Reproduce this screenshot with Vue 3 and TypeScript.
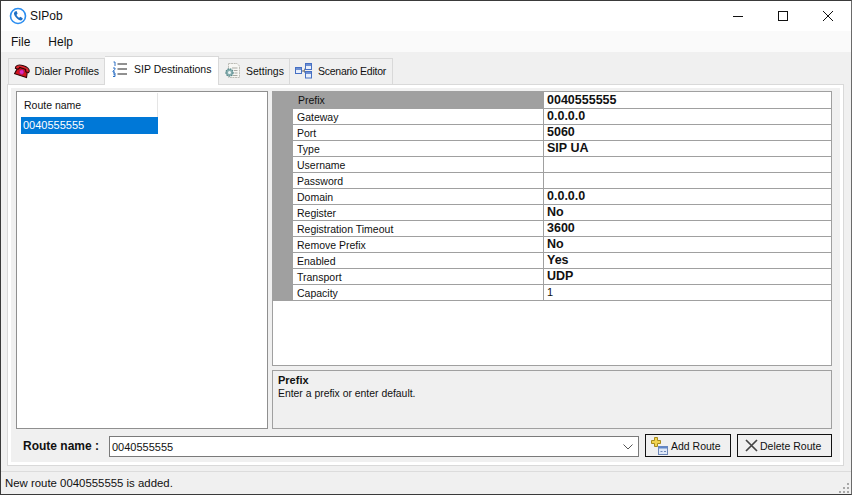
<script setup lang="ts">
interface Prop {
  name: string
  value: string
  plain?: boolean
}

const routes = ['0040555555']

const props: Prop[] = [
  { name: 'Prefix', value: '0040555555' },
  { name: 'Gateway', value: '0.0.0.0' },
  { name: 'Port', value: '5060' },
  { name: 'Type', value: 'SIP UA' },
  { name: 'Username', value: '' },
  { name: 'Password', value: '' },
  { name: 'Domain', value: '0.0.0.0' },
  { name: 'Register', value: 'No' },
  { name: 'Registration Timeout', value: '3600' },
  { name: 'Remove Prefix', value: 'No' },
  { name: 'Enabled', value: 'Yes' },
  { name: 'Transport', value: 'UDP' },
  { name: 'Capacity', value: '1', plain: true },
]
</script>

<template>
  <div class="window">
    <header class="titlebar">
      <svg class="app-icon" width="18" height="18" viewBox="0 0 18 18">
        <circle cx="9" cy="9" r="7.5" fill="#fff" stroke="#2a8df0" stroke-width="1.6" />
        <path d="M6 4.4 L7.6 4 L8.6 6.7 L7.5 7.7 C7.9 9 8.9 10.2 10.2 10.8 L11.3 9.8 L13.8 11.2 L13.2 12.8 C12.4 13.6 11.2 13.5 10 12.9 C7.6 11.7 5.6 9.2 5 7 C4.8 6 5.3 5 6 4.4 Z" fill="#1f6fc4" />
      </svg>
      <span class="app-title">SIPob</span>
      <div class="controls">
        <svg width="12" height="12" viewBox="0 0 12 12"><path d="M1 6.5 H11" stroke="#111" stroke-width="1" /></svg>
        <svg width="12" height="12" viewBox="0 0 12 12"><rect x="1.5" y="1.5" width="9" height="9" fill="none" stroke="#111" stroke-width="1" /></svg>
        <svg width="12" height="12" viewBox="0 0 12 12"><path d="M1 1 L11 11 M11 1 L1 11" stroke="#111" stroke-width="1" /></svg>
      </div>
    </header>

    <nav class="menubar">
      <span>File</span>
      <span>Help</span>
    </nav>

    <div class="tabs">
      <div class="tab first">
        <svg width="20" height="18" viewBox="0 0 20 18">
          <g transform="rotate(18 9 9)">
            <path d="M3 9 L6 5.5 H12 L15.5 9 L16.5 14.5 H2 Z" fill="#d4141e" stroke="#2f0406" stroke-width="1.2" />
            <path d="M0.8 6.5 C2.5 1.5 15.5 1.5 17.2 6.5 L17 8.4 L13.6 8.4 L12.6 5.8 H5.4 L4.4 8.4 L1 8.4 Z" fill="#e3252d" stroke="#2f0406" stroke-width="1.2" />
            <circle cx="9.2" cy="10.2" r="2.7" fill="#e02bc0" stroke="#8a1260" stroke-width="0.6" />
          </g>
        </svg>
        <span>Dialer Profiles</span>
      </div>
      <div class="tab active">
        <svg width="16" height="16" viewBox="0 0 16 16">
          <path d="M5.5 3 H15 M5.5 8 H15 M5.5 13 H15" stroke="#222" stroke-width="1" />
          <path d="M1.5 1 H3 V5 M1 7 H3 V8.5 L1 10 V11 H3 M1 12 H3 V15.5 H1 M1.5 13.7 H3" fill="none" stroke="#2b6fc4" stroke-width="1" />
        </svg>
        <span>SIP Destinations</span>
      </div>
      <div class="tab">
        <svg width="17" height="17" viewBox="0 0 17 17">
          <path d="M4.5 1.5 H13 L15.5 4 V15.5 H4.5 Z" fill="#f7f7f4" stroke="#bcbcb6" stroke-width="1" stroke-dasharray="2 0.6" />
          <path d="M8 6 H13.5 M10 8.5 H13.5 M10.5 11 H13.5 M9 13.5 H13.5" stroke="#a9a9a3" stroke-width="1" />
          <circle cx="5.5" cy="10.5" r="3.6" fill="#86aeb0" stroke="#5a8a8c" stroke-width="1.2" stroke-dasharray="1.6 0.8" />
          <circle cx="5.5" cy="10.5" r="1.5" fill="#eef6f5" />
        </svg>
        <span>Settings</span>
      </div>
      <div class="tab last">
        <svg width="18" height="16" viewBox="0 0 18 16">
          <path d="M6 8 H9 M9 8 L11 4 M9 8 L11 11" stroke="#666" stroke-width="1" fill="none" />
          <rect x="0.5" y="4.5" width="6" height="6" fill="#e8effb" stroke="#4670c4" />
          <rect x="10.5" y="0.5" width="6" height="6" fill="#e8effb" stroke="#4670c4" />
          <rect x="10.5" y="8.5" width="6" height="6.5" fill="#e8effb" stroke="#4670c4" />
          <path d="M1 6 H6 M11 2 H16 M11 10 H16" stroke="#4670c4" stroke-width="1.4" />
        </svg>
        <span>Scenario Editor</span>
      </div>
    </div>

    <main class="page">
      <div class="panes">
        <section class="route-list">
          <div class="route-head">Route name</div>
          <div v-for="route in routes" :key="route" class="route-item">{{ route }}</div>
        </section>

        <section class="right-pane">
          <div class="grid-box">
            <div
              v-for="(p, i) in props"
              :key="p.name"
              class="grid-row"
              :class="{ selected: i === 0 }"
            >
              <div class="cell-margin" />
              <div class="cell-name">{{ p.name }}</div>
              <div class="cell-value" :class="{ plain: p.plain }">{{ p.value }}</div>
            </div>
          </div>
          <div class="help-box">
            <div class="help-title">Prefix</div>
            <div>Enter a prefix or enter default.</div>
          </div>
        </section>
      </div>

      <div class="route-form">
        <label class="form-label">Route name :</label>
        <div class="combo">
          <span>0040555555</span>
          <svg width="12" height="8" viewBox="0 0 12 8"><path d="M1.5 1.5 L6 6 L10.5 1.5" fill="none" stroke="#555" stroke-width="1" /></svg>
        </div>
        <button class="btn add">
          <svg width="17" height="18" viewBox="0 0 17 18">
            <path d="M3.5 0.5 H6.5 V3.5 H9.5 V6.5 H6.5 V9.5 H3.5 V6.5 H0.5 V3.5 H3.5 Z" fill="#f2d34f" stroke="#a68a1c" />
            <rect x="7.5" y="9.5" width="9" height="8" fill="#dfe8f7" stroke="#6d87b8" />
            <rect x="7.5" y="9.5" width="9" height="2" fill="#5f86c9" />
            <path d="M9.5 14.5 H11.5 M13 14.5 H15" stroke="#6d87b8" />
          </svg>
          <span>Add Route</span>
        </button>
        <button class="btn delete">
          <svg width="15" height="15" viewBox="0 0 15 15"><path d="M2 2 L13 13 M13 2 L2 13" stroke="#444" stroke-width="1.7" /></svg>
          <span>Delete Route</span>
        </button>
      </div>
    </main>

    <footer class="statusbar">
      <span>New route 0040555555 is added.</span>
      <svg class="grip" width="12" height="12" viewBox="0 0 12 12" fill="#a8a8a8">
        <rect x="9" y="1" width="2" height="2" />
        <rect x="5" y="5" width="2" height="2" />
        <rect x="9" y="5" width="2" height="2" />
        <rect x="1" y="9" width="2" height="2" />
        <rect x="5" y="9" width="2" height="2" />
        <rect x="9" y="9" width="2" height="2" />
      </svg>
    </footer>
  </div>
</template>

<style>
html,
body {
  margin: 0;
  background: #f0f0f0;
}
</style>

<style scoped>
.window {
  width: 852px;
  height: 495px;
  box-sizing: border-box;
  display: flex;
  flex-direction: column;
  border: 1px solid #3a3a3a;
  border-right-color: #6a6a6a;
  background: #f0f0f0;
  color: #111;
  font-family: "Liberation Sans", Arial, sans-serif;
  font-size: 11px;
  overflow: hidden;
}

.titlebar {
  height: 30px;
  flex: none;
  display: flex;
  align-items: center;
  background: #fff;
  padding-left: 8px;
}

.app-title {
  margin-left: 3px;
  font-size: 12px;
}

.controls {
  margin-left: auto;
  display: flex;
  gap: 33px;
  padding-right: 17px;
}

.menubar {
  height: 21px;
  flex: none;
  display: flex;
  align-items: center;
  gap: 18px;
  padding-left: 10px;
  background: #fafafa;
  font-size: 12px;
}

.tabs {
  height: 32px;
  flex: none;
  display: flex;
  align-items: flex-end;
  padding-left: 7px;
  position: relative;
  z-index: 1;
  font-size: 10.5px;
}

.tab {
  height: 26px;
  box-sizing: border-box;
  display: flex;
  align-items: center;
  gap: 5px;
  padding: 0 5px 2px 5px;
  border: 1px solid #d9d9d9;
  border-bottom: none;
  border-left-width: 0;
  background: #f0f0f0;
  white-space: nowrap;
}

.tab.first {
  width: 97px;
  gap: 3px;
  border-left-width: 1px;
  letter-spacing: -0.05px;
}

.tab.active {
  width: 114px;
  height: 29px;
  gap: 6px;
  padding: 0 6px 4px 7px;
  background: #fff;
  margin-bottom: -1px;
  border-left-width: 0;
}

.tab.last {
  width: 103px;
  letter-spacing: -0.25px;
}

.page {
  width: 837px;
  height: 382px;
  flex: none;
  box-sizing: border-box;
  margin-left: 6px;
  display: flex;
  flex-direction: column;
  gap: 5px;
  padding: 6px 11px 0 8px;
  border: 1px solid #d9d9d9;
  outline: 3px solid #fff;
  outline-offset: -4px;
  background: #f0f0f0;
}

.panes {
  height: 338px;
  flex: none;
  display: flex;
  gap: 4px;
}

.route-list {
  width: 252px;
  flex: none;
  box-sizing: border-box;
  border: 1px solid #8f8f8f;
  background: #fff;
  padding: 1px 4px;
}

.route-head {
  width: 137px;
  height: 24px;
  box-sizing: border-box;
  display: flex;
  align-items: center;
  padding-left: 3px;
  border-right: 1px solid #e5e5e5;
  font-size: 10.5px;
}

.route-item {
  width: 137px;
  height: 17px;
  line-height: 17px;
  padding-left: 2px;
  box-sizing: border-box;
  background: #0078d7;
  color: #fff;
}

.right-pane {
  flex: 1;
  display: flex;
  flex-direction: column;
  gap: 4px;
}

.grid-box {
  height: 275px;
  flex: none;
  box-sizing: border-box;
  border: 1px solid #a0a0a0;
  background: #fff;
}

.grid-row {
  display: grid;
  grid-template-columns: 20px 251px 1fr;
  height: 16px;
  box-sizing: border-box;
  border-bottom: 1px solid #a0a0a0;
  line-height: 15px;
}

.grid-row.selected {
  height: 17px;
  line-height: 17px;
}

.cell-margin {
  background: #a0a0a0;
}

.cell-name {
  padding-left: 4px;
  line-height: 17px;
  font-size: 10.5px;
  border-right: 1px solid #a0a0a0;
  overflow: hidden;
}

.cell-value {
  padding-left: 3px;
  font-size: 12.5px;
  font-weight: 700;
}

.cell-value.plain {
  font-size: 11px;
  font-weight: 400;
}

.grid-row.selected .cell-name {
  background: #a0a0a0;
  padding-left: 5px;
}

.help-box {
  flex: 1;
  box-sizing: border-box;
  border: 1px solid #a0a0a0;
  padding: 3px 5px;
  line-height: 13px;
  font-size: 10.4px;
}

.help-title {
  font-weight: 700;
  font-size: 11px;
}

.route-form {
  height: 23px;
  flex: none;
  display: flex;
  align-items: stretch;
}

.form-label {
  width: 93px;
  flex: none;
  padding-left: 7px;
  box-sizing: border-box;
  display: flex;
  align-items: center;
  font-size: 12px;
  font-weight: 700;
}

.combo {
  width: 530px;
  height: 21px;
  margin-top: 2px;
  flex: none;
  box-sizing: border-box;
  display: flex;
  align-items: center;
  justify-content: space-between;
  padding: 0 4px 0 2px;
  border: 1px solid #7a7a7a;
  background: #fff;
}

.btn {
  height: 23px;
  box-sizing: border-box;
  display: flex;
  align-items: center;
  padding: 0;
  border: 1px solid #111;
  background: #f0f0f0;
  color: #111;
  font: inherit;
  font-size: 10.5px;
  white-space: nowrap;
}

.btn.add {
  width: 86px;
  margin-left: 6px;
  gap: 3px;
  padding-left: 5px;
}

.btn.delete {
  width: 95px;
  margin-left: 6px;
  gap: 1px;
  padding-left: 6px;
}

.statusbar {
  flex: 1;
  display: flex;
  align-items: center;
  justify-content: space-between;
  margin-top: 5px;
  padding: 0 1px 0 4px;
  border-top: 1px solid #dcdcdc;
  font-size: 11.4px;
}

.grip {
  align-self: flex-end;
}
</style>
